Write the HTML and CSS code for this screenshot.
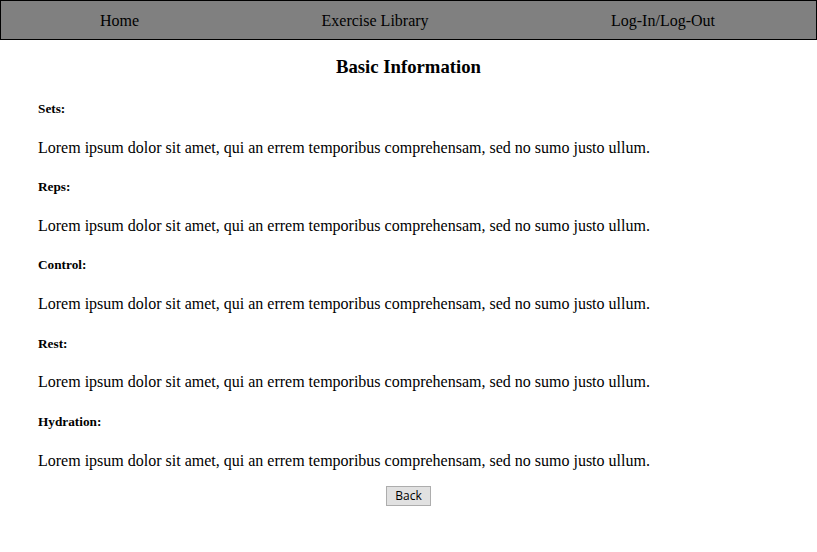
FILE: index.html
```html
<!DOCTYPE html>
<html>
<head>
<meta charset="utf-8">
<title>Basic Information</title>
<link rel="stylesheet" href="styles.css">
</head>
<body>
<nav class="navbar">
  <a class="nav-link" href="#">Home</a>
  <a class="nav-link" href="#">Exercise Library</a>
  <a class="nav-link" href="#">Log-In/Log-Out</a>
</nav>
<main class="content">
  <h3 class="title">Basic Information</h3>
  <h5 class="label">Sets:</h5>
  <p class="text">Lorem ipsum dolor sit amet, qui an errem temporibus comprehensam, sed no sumo justo ullum.</p>
  <h5 class="label">Reps:</h5>
  <p class="text">Lorem ipsum dolor sit amet, qui an errem temporibus comprehensam, sed no sumo justo ullum.</p>
  <h5 class="label">Control:</h5>
  <p class="text">Lorem ipsum dolor sit amet, qui an errem temporibus comprehensam, sed no sumo justo ullum.</p>
  <h5 class="label">Rest:</h5>
  <p class="text">Lorem ipsum dolor sit amet, qui an errem temporibus comprehensam, sed no sumo justo ullum.</p>
  <h5 class="label">Hydration:</h5>
  <p class="text">Lorem ipsum dolor sit amet, qui an errem temporibus comprehensam, sed no sumo justo ullum.</p>
  <div class="actions">
    <button class="back-btn" type="button">Back</button>
  </div>
</main>
</body>
</html>
```
FILE: styles.css
```css
html, body {
  margin: 0;
  padding: 0;
  background: #fff;
  font-family: "Liberation Serif", "Times New Roman", serif;
  color: #000;
}
.navbar {
  display: flex;
  justify-content: space-between;
  align-items: center;
  height: 37px;
  padding: 1px 101px 0 99px;
  background: #808080;
  border: 1px solid #000;
}
.nav-link {
  color: #000;
  text-decoration: none;
  font-size: 16px;
}
.content {
  padding: 0 38px;
}
.title {
  text-align: center;
  font-size: 18.72px;
  margin: 16px 0 23px;
}
.label {
  font-size: 13.28px;
  margin: 22.4px 0 21.8px;
}
.text {
  font-size: 16px;
  margin: 16px 0;
}
.actions {
  display: flex;
  justify-content: center;
}
.back-btn {
  font-family: "Open Sans", "DejaVu Sans", sans-serif;
  font-size: 12px;
  color: #000;
  background: #e1e1e1;
  border: 1px solid #adadad;
  padding: 0 8px;
  height: 20px;
  line-height: 17px;
}
```
